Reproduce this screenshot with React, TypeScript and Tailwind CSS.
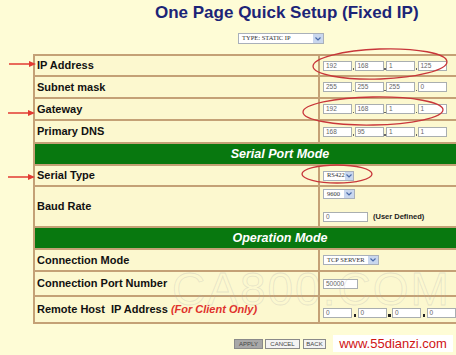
import React from 'react';

const border = 'border-[#c4a176]';

function Box({ v, className = 'w-[29px]' }: { v: string; className?: string }) {
  return (
    <div className={`${className} h-[10px] border border-[#a9aeb0] bg-white pl-[2px] text-[6.5px] leading-[8px] text-[#666]`}>
      {v}
    </div>
  );
}

function Chevron() {
  return (
    <div className="flex h-full w-[10px] items-center justify-center bg-[#c9d7ee]">
      <svg width="6" height="4" viewBox="0 0 6 4">
        <path d="M0.5 0.5 L3 3 L5.5 0.5" fill="none" stroke="#4a6aa8" strokeWidth="1.2" />
      </svg>
    </div>
  );
}

function Select({ label, className }: { label: string; className: string }) {
  return (
    <div className={`${className} flex items-center border border-[#a9b0ba] bg-white`}>
      <span className="flex-1 pl-[3px] font-['Liberation_Serif'] text-[6.5px] leading-none text-[#333]">{label}</span>
      <Chevron />
    </div>
  );
}

function IpBoxes({ vals }: { vals: string[] }) {
  return (
    <div className="flex items-end">
      {vals.map((v, i) => (
        <React.Fragment key={i}>
          {i > 0 && <span className="mb-[1px] ml-[0.5px] mr-[0.5px] h-[1.5px] w-[1.5px] bg-[#666]" />}
          <Box v={v} />
        </React.Fragment>
      ))}
    </div>
  );
}

function Row({ label, h, children }: { label: React.ReactNode; h: string; children?: React.ReactNode }) {
  return (
    <div className={`flex ${h} border-b-2 ${border} bg-[#fcf8cf]`}>
      <div className={`flex w-[285px] items-center border-r-2 ${border} pl-[2px] text-[11px] font-bold text-[#111]`}>
        {label}
      </div>
      <div className="flex flex-1 items-center pl-[3px]">{children}</div>
    </div>
  );
}

function Header({ title }: { title: string }) {
  return (
    <div className={`h-[22px] border-b-2 ${border}`}>
      <div className="flex h-full items-center justify-center bg-[#08780f] text-[12.5px] font-bold italic text-white">
        {title}
      </div>
    </div>
  );
}

function Btn({ label, className }: { label: string; className: string }) {
  return (
    <div className={`${className} flex h-[10px] items-center justify-center border border-[#8a8a8a] text-[6px] leading-none text-[#444]`}>
      {label}
    </div>
  );
}

export default function App() {
  return (
    <div className="relative h-[355px] w-[456px] overflow-hidden bg-[#fefcd6] font-['Liberation_Sans',Arial,sans-serif]">
      <div className="pl-[155px] pt-[3px] text-[17px] font-bold leading-[20px] text-[#1c2477] whitespace-nowrap">
        One Page Quick Setup (Fixed IP)
      </div>
      <div className="mt-[10px] pl-[238px]">
        <Select label="TYPE: STATIC IP" className="h-[11px] w-[86px]" />
      </div>

      <div className={`ml-[33px] mt-[10px] w-[494px] border-x-2 border-t-2 ${border}`}>
        <Row label="IP Address" h="h-[21px]">
          <IpBoxes vals={['192', '168', '1', '125']} />
        </Row>
        <Row label="Subnet mask" h="h-[22px]">
          <IpBoxes vals={['255', '255', '255', '0']} />
        </Row>
        <Row label="Gateway" h="h-[22px]">
          <IpBoxes vals={['192', '168', '1', '1']} />
        </Row>
        <Row label="Primary DNS" h="h-[23px]">
          <IpBoxes vals={['168', '95', '1', '1']} />
        </Row>
        <Header title="Serial Port Mode" />
        <Row label="Serial Type" h="h-[21px]">
          <Select label="RS422" className="h-[10px] w-[31px]" />
        </Row>
        <Row label="Baud Rate" h="h-[41px]">
          <div className="flex h-full flex-col pt-[2px]">
            <Select label="9600" className="h-[10px] w-[32px]" />
            <div className="mt-[12px] flex items-center">
              <Box v="0" className="w-[45px]" />
              <span className="ml-[5px] text-[7.5px] font-bold text-[#222]">(User Defined)</span>
            </div>
          </div>
        </Row>
        <Header title="Operation Mode" />
        <Row label="Connection Mode" h="h-[22px]">
          <Select label="TCP SERVER" className="h-[10px] w-[56px]" />
        </Row>
        <Row label="Connection Port Number" h="h-[25px]">
          <Box v="50000" className="w-[35px]" />
        </Row>
        <Row
          label={
            <span className="whitespace-pre">
              Remote Host  IP Address <span className="italic text-[#e0322c]">(For Client Only)</span>
            </span>
          }
          h="h-[27px]"
        >
          <div className="mt-[6px] flex items-end">
            {['0', '0', '0', '0'].map((v, i) => (
              <React.Fragment key={i}>
                {i > 0 && <span className="mx-[1.5px] mb-[1px] h-[2.5px] w-[2.5px] bg-[#222]" />}
                <Box v={v} />
              </React.Fragment>
            ))}
          </div>
        </Row>
      </div>

      <div className="ml-[234px] mt-[11px] flex items-center">
        <Btn label="APPLY" className="w-[29px] bg-[#a8a8a8]" />
        <Btn label="CANCEL" className="ml-[2px] w-[35px] bg-[#f3f3f3]" />
        <Btn label="BACK" className="ml-[3px] w-[23px] bg-[#f3f3f3]" />
        <div className="ml-[7px] flex h-[17px] w-[120px] items-center justify-center bg-white text-[13px] text-[#d01414]">
          www.55dianzi.com
        </div>
      </div>

      <div className="pointer-events-none absolute left-[172px] top-[266px] text-[46px] font-light leading-none tracking-[2px] text-transparent [-webkit-text-stroke:0.8px_rgba(175,175,175,0.3)]">
        CA800.COM
      </div>

      <svg className="pointer-events-none absolute left-0 top-0" width="456" height="355" viewBox="0 0 456 355">
        <g fill="none" stroke="#c8363a" strokeWidth="1.3">
          <ellipse cx="380" cy="64" rx="67" ry="15" transform="rotate(-2 380 64)" />
          <ellipse cx="373" cy="111" rx="70" ry="14" transform="rotate(-1 373 111)" />
          <ellipse cx="337" cy="174" rx="35" ry="9" />
        </g>
        <g fill="#e23a32" stroke="#e23a32">
          <line x1="9" y1="64" x2="30" y2="64" strokeWidth="1.5" />
          <polygon points="29,61 36,64 29,67" strokeWidth="0" />
          <line x1="8" y1="113" x2="29" y2="113" strokeWidth="1.5" />
          <polygon points="28,110 35,113 28,116" strokeWidth="0" />
          <line x1="8" y1="177" x2="29" y2="177" strokeWidth="1.5" />
          <polygon points="28,174 35,177 28,180" strokeWidth="0" />
        </g>
      </svg>
    </div>
  );
}
